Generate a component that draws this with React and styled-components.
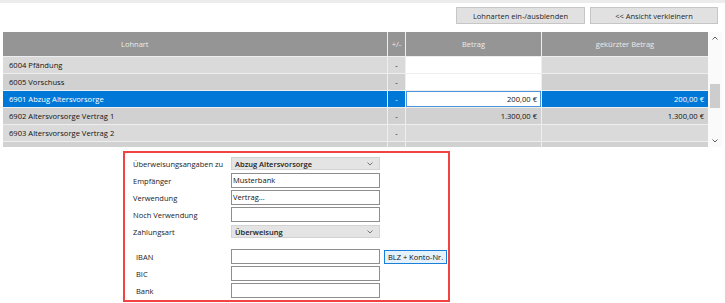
import React from "react";
import styled, { createGlobalStyle, css } from "styled-components";

const Global = createGlobalStyle`
  html, body { margin: 0; padding: 0; background: #fff; }
  body { font-family: "Open Sans", "Noto Sans", Arial, sans-serif; }
  * { box-sizing: border-box; }
`;

const FONT = `"Open Sans", "Noto Sans", Arial, sans-serif`;

const Page = styled.div`
  width: 725px;
  height: 303px;
  overflow: hidden;
  background: #fff;
`;

const TopStrip = styled.div`
  height: 3px;
  background: #ececec;
`;

const Toolbar = styled.div`
  display: flex;
  justify-content: flex-end;
  gap: 5px;
  padding: 4px 7px 0 0;
`;

const ToolButton = styled.button`
  width: ${(p) => p.$w}px;
  height: 17px;
  padding: 0;
  background: #e1e1e1;
  border: 1px solid #c6c6c6;
  font-family: ${FONT};
  font-size: 7.5px;
  color: #1e1e1e;
  display: flex;
  align-items: center;
  justify-content: center;
`;

const GridArea = styled.div`
  display: flex;
  margin: 8px 0 0 3px;
  height: 115px;
`;

const Table = styled.div`
  width: 705px;
  height: 115px;
  overflow: hidden;
  display: grid;
  grid-template-columns: 384px 17px 135px 166px;
  grid-template-rows: 24px;
  grid-auto-rows: 16px;
  gap: 1px;
  background: #eeeeee;
  align-content: start;
`;

const HeadCell = styled.div`
  background: #959595;
  color: #ececec;
  font-family: ${FONT};
  font-size: 7.5px;
  display: flex;
  align-items: center;
  justify-content: ${(p) => (p.$pad ? "flex-start" : "center")};
  padding-left: ${(p) => p.$pad || 0}px;
`;

const toneBg = (t) => (t === "dark" ? "#d1d1d1" : "#dadada");

const Cell = styled.div`
  font-family: ${FONT};
  font-size: 7.6px;
  color: #111;
  display: flex;
  align-items: center;
  white-space: nowrap;
  justify-content: ${(p) =>
    p.$align === "right" ? "flex-end" : p.$align === "center" ? "center" : "flex-start"};
  padding: ${(p) =>
    p.$align === "right" ? "0 4px 0 0" : p.$align === "center" ? "0" : "0 0 0 6px"};
  background: ${(p) => toneBg(p.$tone)};
  ${(p) =>
    p.$kind === "white" &&
    css`
      background: #ffffff;
    `}
  ${(p) =>
    p.$kind === "selected" &&
    css`
      background: #0078d7;
      color: #ffffff;
    `}
  ${(p) =>
    p.$kind === "editing" &&
    css`
      background: #ffffff;
      box-shadow: inset 0 0 0 1px #4c95dc;
    `}
`;

const Scrollbar = styled.div`
  width: 14px;
  height: 115px;
  display: flex;
  flex-direction: column;
  background: #fafafa;
`;

const ScrollArrow = styled.div`
  height: 12px;
  display: flex;
  align-items: center;
  justify-content: center;
`;

const Track = styled.div`
  flex: 1;
  display: flex;
  flex-direction: column;
  align-items: center;
`;

const Thumb = styled.div`
  width: 10px;
  height: ${(p) => p.$h}px;
  margin-top: ${(p) => p.$offset}px;
  background: #cdcdcd;
`;

const Panel = styled.div`
  margin: 4px 0 0 123px;
  width: 327px;
  height: 151px;
  border: 2px solid #f24343;
  padding: 2px 0 0 8px;
  display: flex;
  flex-direction: column;
`;

const FormRow = styled.div`
  display: flex;
  align-items: center;
  height: 17px;
  margin-top: ${(p) => p.$gap || 0}px;
`;

const Label = styled.div`
  width: 98px;
  padding-left: ${(p) => p.$indent || 0}px;
  font-family: ${FONT};
  font-size: 7.5px;
  color: #222;
  white-space: nowrap;
`;

const TextBox = styled.div`
  width: 149px;
  height: 15px;
  border: 1px solid #8e8e8e;
  background: #fff;
  font-family: ${FONT};
  font-size: 7.5px;
  color: #111;
  padding: 0 0 2px 1px;
  display: flex;
  align-items: center;
`;

const SelectBox = styled.div`
  width: 149px;
  height: 13px;
  border: 1px solid #d3d3d3;
  background: #e4e4e4;
  font-family: ${FONT};
  font-size: 7.5px;
  font-weight: 600;
  color: #1a1a1a;
  padding: 0 6px 0 3px;
  display: flex;
  align-items: center;
  justify-content: space-between;
`;

const SideButton = styled.div`
  margin-left: 4px;
  width: 63px;
  height: 14px;
  border: 1px solid #1a7fd8;
  background: #e5f1fb;
  font-family: ${FONT};
  font-size: 7.5px;
  color: #111;
  display: flex;
  align-items: center;
  justify-content: center;
  white-space: nowrap;
`;

const Chevron = ({ up, color = "#666" }) => (
  <svg width="6" height="4" viewBox="0 0 6 4">
    <polyline
      points={up ? "0.5,3.5 3,1 5.5,3.5" : "0.5,0.5 3,3 5.5,0.5"}
      fill="none"
      stroke={color}
      strokeWidth="1"
    />
  </svg>
);

const rows = [
  { name: "6004 Pfändung", betragKind: "white", tone: "light" },
  { name: "6005 Vorschuss", betragKind: "white", tone: "dark" },
  { name: "6901 Abzug Altersvorsorge", betrag: "200,00 €", gek: "200,00 €", selected: true, tone: "light" },
  { name: "6902 Altersvorsorge Vertrag 1", betrag: "1.300,00 €", gek: "1.300,00 €", tone: "dark" },
  { name: "6903 Altersvorsorge Vertrag 2", tone: "light" },
  { name: "", tone: "dark", dash: "" },
];

const formRows = [
  { label: "Überweisungsangaben zu", select: "Abzug Altersvorsorge" },
  { label: "Empfänger", text: "Musterbank" },
  { label: "Verwendung", text: "Vertrag..." },
  { label: "Noch Verwendung", text: "" },
  { label: "Zahlungsart", select: "Überweisung" },
  { label: "IBAN", text: "", indent: 3, gap: 8, button: "BLZ + Konto-Nr." },
  { label: "BIC", text: "", indent: 3 },
  { label: "Bank", text: "", indent: 3 },
];

export default function App() {
  return (
    <Page>
      <Global />
      <TopStrip />
      <Toolbar>
        <ToolButton $w={129}>Lohnarten ein-/ausblenden</ToolButton>
        <ToolButton $w={128}>&lt;&lt; Ansicht verkleinern</ToolButton>
      </Toolbar>
      <GridArea>
        <Table>
          <HeadCell $pad={118}>Lohnart</HeadCell>
          <HeadCell>+/-</HeadCell>
          <HeadCell>Betrag</HeadCell>
          <HeadCell>gekürzter Betrag</HeadCell>
          {rows.map((r, i) => (
            <React.Fragment key={i}>
              <Cell $tone={r.tone} $kind={r.selected ? "selected" : undefined}>
                {r.name}
              </Cell>
              <Cell $tone={r.tone} $align="center" $kind={r.selected ? "selected" : undefined}>
                {r.dash === undefined ? "-" : r.dash}
              </Cell>
              <Cell $tone={r.tone} $align="right" $kind={r.selected ? "editing" : r.betragKind}>
                {r.betrag}
              </Cell>
              <Cell $tone={r.tone} $align="right" $kind={r.selected ? "selected" : undefined}>
                {r.gek}
              </Cell>
            </React.Fragment>
          ))}
        </Table>
        <Scrollbar>
          <ScrollArrow>
            <Chevron up color="#606060" />
          </ScrollArrow>
          <Track>
            <Thumb $offset={40} $h={24} />
          </Track>
          <ScrollArrow>
            <Chevron color="#606060" />
          </ScrollArrow>
        </Scrollbar>
      </GridArea>
      <Panel>
        {formRows.map((f, i) => (
          <FormRow key={i} $gap={f.gap}>
            <Label $indent={f.indent}>{f.label}</Label>
            {f.select !== undefined ? (
              <SelectBox>
                <span>{f.select}</span>
                <Chevron color="#777" />
              </SelectBox>
            ) : (
              <TextBox>{f.text}</TextBox>
            )}
            {f.button && <SideButton>{f.button}</SideButton>}
          </FormRow>
        ))}
      </Panel>
    </Page>
  );
}
